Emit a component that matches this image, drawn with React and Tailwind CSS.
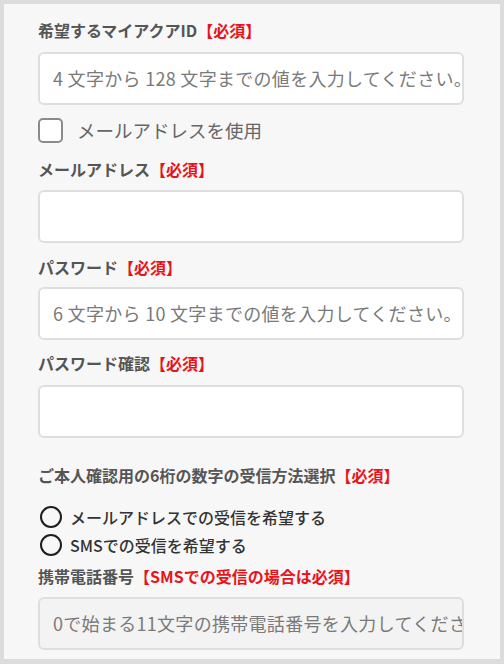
import React from 'react';

const font = { fontFamily: '"Noto Sans CJK JP", "Noto Sans", sans-serif' };

const Label = ({ text, req = '必須', className = '' }) => (
  <div className={`text-[16px] leading-[20px] font-bold text-[#555] whitespace-nowrap ${className}`}>
    {text}
    <span className="text-[#e8141c]">【{req}】</span>
  </div>
);

const Input = ({ placeholder = '', disabled = false, className = '' }) => (
  <div
    className={`h-[53px] w-full rounded-[6px] border-2 border-[#dedede] flex items-center pl-[13px] pr-[10px] overflow-hidden ${
      disabled ? 'bg-[#f3f3f3]' : 'bg-white'
    } ${className}`}
  >
    <span className="text-[18px] tracking-[0.3px] text-[#7a7a7a] whitespace-nowrap">{placeholder}</span>
  </div>
);

const Radio = ({ label, className = '' }) => (
  <div className={`flex items-center h-[26px] ${className}`}>
    <span className="w-[22px] h-[22px] rounded-full border-[2.5px] border-[#1e1e1e] ml-[2px]" />
    <span className="ml-[8px] text-[16px] font-medium text-[#333] whitespace-nowrap">{label}</span>
  </div>
);

export default function App() {
  return (
    <div className="w-[504px] h-[664px] bg-[#dcdcdc] pt-[4px] pl-[4px] pr-[4px] pb-[5px]" style={font}>
      <div className="h-full bg-[#f7f7f7] pl-[34px] pr-[36px] pt-[16px] flex flex-col">
        <Label text="希望するマイアクアID" />
        <Input className="mt-[12px]" placeholder="4 文字から 128 文字までの値を入力してください。" />

        <div className="flex items-center h-[25px] mt-[13px]">
          <span className="w-[25px] h-[25px] rounded-[5px] border-2 border-[#8a8a8a] bg-white" />
          <span className="ml-[14px] text-[18.5px] text-[#666] whitespace-nowrap">メールアドレスを使用</span>
        </div>

        <Label text="メールアドレス" className="mt-[16px]" />
        <Input className="mt-[11px]" />

        <Label text="パスワード" className="mt-[14px]" />
        <Input className="mt-[10px]" placeholder="6 文字から 10 文字までの値を入力してください。" />

        <Label text="パスワード確認" className="mt-[13px]" />
        <Input className="mt-[12px]" />

        <Label text="ご本人確認用の6桁の数字の受信方法選択" className="mt-[27px]" />
        <Radio label="メールアドレスでの受信を希望する" className="mt-[19px]" />
        <Radio label="SMSでの受信を希望する" className="mt-[2px]" />

        <Label text="携帯電話番号" req="SMSでの受信の場合は必須" className="mt-[8px]" />
        <Input className="mt-[11px]" disabled placeholder="0で始まる11文字の携帯電話番号を入力してください。" />
      </div>
    </div>
  );
}
